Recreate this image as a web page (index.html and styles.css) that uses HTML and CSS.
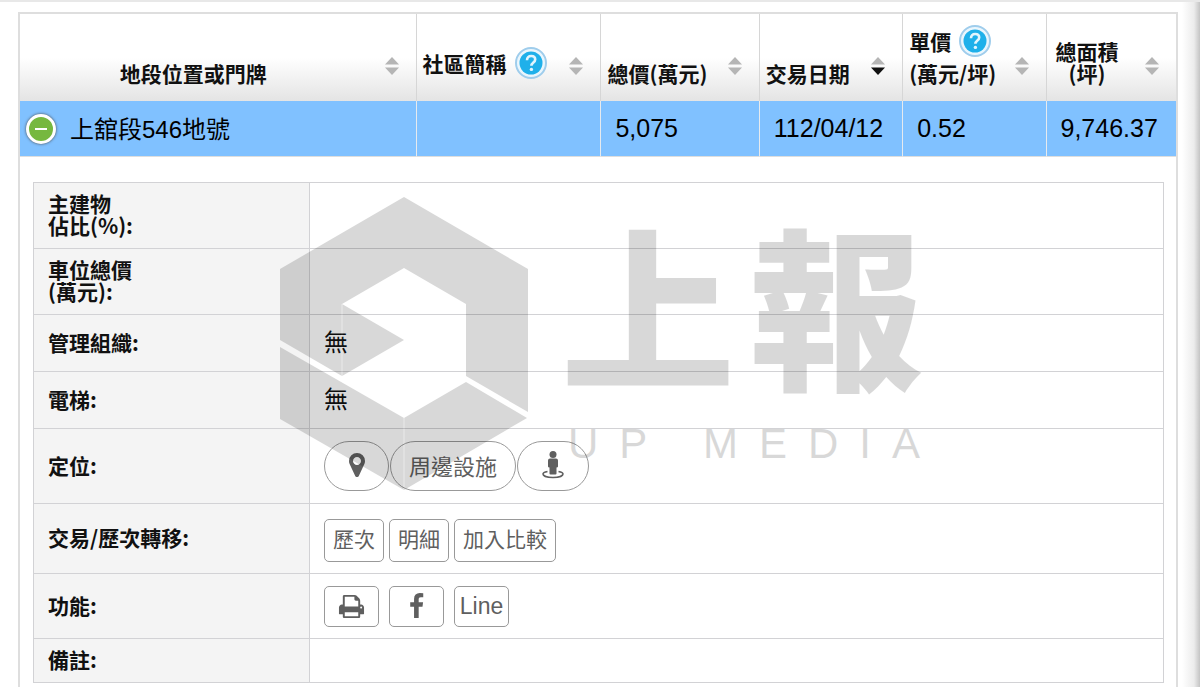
FILE: index.html
```html
<!DOCTYPE html>
<html lang="zh-Hant">
<head>
    <meta charset="UTF-8">
    <meta name="viewport" content="width=device-width, initial-scale=1.0">
    <title>上舘段546地號</title>
    <link rel="stylesheet" href="styles.css">
</head>
<body>
    <!-- shared icons -->
    <svg class="sprite" width="0" height="0" aria-hidden="true">
        <symbol id="icon-sort" viewBox="0 0 14 18">
            <path class="up" d="M7 0l7 7.500H0z"/>
            <path class="down" d="M7 18l7-7.500H0z"/>
        </symbol>
        <symbol id="icon-help" viewBox="0 0 32 32">
            <circle cx="16" cy="16" r="15" fill="#eaf6fd" stroke="#9fcdec" stroke-width="2"/>
            <circle cx="16" cy="16" r="11.500" fill="#1fb0ea"/>
            <path d="M12 13.200c0-2.600 1.700-4.200 4.200-4.200 2.400 0 4 1.400 4 3.500 0 3-3.800 3-3.800 6.300" fill="none" stroke="#e2f5fd" stroke-width="2.600"/>
            <circle cx="16.400" cy="22.400" r="1.700" fill="#e2f5fd"/>
        </symbol>
    </svg>

    <div class="page">
        <table class="result">
            <colgroup>
                <col class="col-place">
                <col class="col-community">
                <col class="col-total">
                <col class="col-date">
                <col class="col-unit">
                <col class="col-area">
            </colgroup>
            <thead>
                <tr>
                    <th>
                        <div class="head">
                            <span class="head-text center">地段位置或門牌</span>
                            <svg class="sort"><use href="#icon-sort"/></svg>
                        </div>
                    </th>
                    <th>
                        <div class="head">
                            <span class="head-text"><span class="with-help">社區簡稱 <svg class="help"><use href="#icon-help"/></svg></span></span>
                            <svg class="sort"><use href="#icon-sort"/></svg>
                        </div>
                    </th>
                    <th>
                        <div class="head">
                            <span class="head-text">總價(萬元)</span>
                            <svg class="sort"><use href="#icon-sort"/></svg>
                        </div>
                    </th>
                    <th>
                        <div class="head">
                            <span class="head-text">交易日期</span>
                            <svg class="sort desc"><use href="#icon-sort"/></svg>
                        </div>
                    </th>
                    <th>
                        <div class="head">
                            <span class="head-text"><span class="with-help">單價 <svg class="help"><use href="#icon-help"/></svg></span>(萬元/坪)</span>
                            <svg class="sort"><use href="#icon-sort"/></svg>
                        </div>
                    </th>
                    <th>
                        <div class="head">
                            <span class="head-text area">總面積<br>(坪)</span>
                            <svg class="sort"><use href="#icon-sort"/></svg>
                        </div>
                    </th>
                </tr>
            </thead>
            <tbody>
                <tr class="selected">
                    <td class="place">
                        <div class="place-inner">
                            <button type="button" class="toggle" aria-label="收合"></button>
                            <span class="place-name">上舘段546地號</span>
                        </div>
                    </td>
                    <td></td>
                    <td>5,075</td>
                    <td>112/04/12</td>
                    <td>0.52</td>
                    <td>9,746.37</td>
                </tr>
                <tr>
                    <td colspan="6" class="child">
                        <table class="detail">
                            <tr>
                                <th scope="row">主建物<br>佔比(%):</th>
                                <td></td>
                            </tr>
                            <tr>
                                <th scope="row">車位總價<br>(萬元):</th>
                                <td></td>
                            </tr>
                            <tr>
                                <th scope="row">管理組織:</th>
                                <td>無</td>
                            </tr>
                            <tr>
                                <th scope="row">電梯:</th>
                                <td>無</td>
                            </tr>
                            <tr>
                                <th scope="row">定位:</th>
                                <td>
                                    <div class="pills">
                                        <button type="button" class="pill" aria-label="地圖">
                                            <svg class="marker" viewBox="0 128 1024 1536"><path d="M768 640q0-106-75-181t-181-75-181 75-75 181 75 181 181 75 181-75 75-181zm256 0q0 109-33 179l-364 774q-16 33-47.500 52t-67.500 19-67.500-19-46.500-52l-365-774q-33-70-33-179 0-212 150-362t362-150 362 150 150 362z"/></svg>
                                        </button>
                                        <button type="button" class="pill wide">周邊設施</button>
                                        <button type="button" class="pill street" aria-label="街景">
                                            <svg class="person" viewBox="0 0 22 28">
                                                <circle cx="11" cy="3.500" r="3.500"/>
                                                <path d="M8 7.500h6q2 0 2 2v6q0 1-1.500 1v6q0 1-1 1h-5q-1 0-1-1v-6q-1.500 0-1.500-1v-6q0-2 2-2z"/>
                                                <path d="M5.500 20.500c-3 .6-4.500 1.500-4.500 2.600 0 1.900 4.200 3.400 10 3.400s10-1.500 10-3.400c0-1.100-1.500-2-4.500-2.600" fill="none" stroke="currentColor" stroke-width="1.600"/>
                                            </svg>
                                        </button>
                                    </div>
                                </td>
                            </tr>
                            <tr>
                                <th scope="row">交易/歷次轉移:</th>
                                <td>
                                    <div class="history">
                                        <button type="button" class="btn">歷次</button>
                                        <button type="button" class="btn">明細</button>
                                        <button type="button" class="btn">加入比較</button>
                                    </div>
                                </td>
                            </tr>
                            <tr>
                                <th scope="row">功能:</th>
                                <td>
                                    <div class="share">
                                        <button type="button" class="btn" aria-label="列印">
                                            <svg class="icon" viewBox="0 0 1792 1792"><path d="M448 1536h896v-256h-896v256zm0-640h896v-384h-160q-40 0-68-28t-28-68v-160h-640v640zm1152 64q0-26-19-45t-45-19-45 19-19 45 19 45 45 19 45-19 19-45zm128 0v416q0 13-9.500 22.500t-22.500 9.500h-224v160q0 40-28 68t-68 28h-960q-40 0-68-28t-28-68v-160h-224q-13 0-22.500-9.500t-9.500-22.500v-416q0-79 56.500-135.500t135.500-56.500h64v-544q0-40 28-68t68-28h672q40 0 88 20t76 48l152 152q28 28 48 76t20 88v256h64q79 0 135.500 56.500t56.500 135.500z"/></svg>
                                        </button>
                                        <button type="button" class="btn" aria-label="Facebook">
                                            <svg class="icon" viewBox="0 0 1792 1792"><path d="M1343 12v264h-157q-86 0-116 36t-30 108v189h293l-39 296h-254v759h-306v-759h-255v-296h255v-218q0-186 104-288.500t277-102.500q147 0 228 12z"/></svg>
                                        </button>
                                        <button type="button" class="btn line">Line</button>
                                    </div>
                                </td>
                            </tr>
                            <tr>
                                <th scope="row">備註:</th>
                                <td></td>
                            </tr>
                        </table>
                    </td>
                </tr>
            </tbody>
        </table>

        <div class="watermark">
            <svg class="mark" viewBox="0 0 250 294">
                <path d="M125 0L249 72v143l-62-36v-72l-62-36-62 36 62 36-62 36L1 143V72z"/>
                <path d="M1 150l124 71 62-36 61 36-123 72L1 222z"/>
                <path class="seam" d="M63 107v72M125 221v72"/>
            </svg>
            <div class="brand">
                <div class="brand-zh"><span>上</span><span>報</span></div>
                <div class="brand-en">
                    <div class="word"><span>U</span><span>P</span></div>
                    <div class="word"><span>M</span><span>E</span><span>D</span><span>I</span><span>A</span></div>
                </div>
            </div>
        </div>
    </div>
</body>
</html>
```
FILE: styles.css
```css
* {
    box-sizing: border-box;
}
body {
    margin: 0;
    background-color: #fff;
    color: #111;
    font-family: "Liberation Sans", "Noto Sans CJK TC", sans-serif;
}
.sprite {
    position: absolute;
}
.page {
    position: relative;
    min-height: 100vh;
    padding: 10px 22px 0 18px;
    border-top: 2px solid #e8e8e8;
    background: linear-gradient(to left, #c4c4c4, #ececec 6px, #fff 18px);
}
table {
    width: 100%;
    border-spacing: 0;
    border-collapse: collapse;
}
button {
    margin: 0;
    padding: 0;
    font-family: inherit;
    cursor: pointer;
}

/* result list */
.result {
    table-layout: fixed;
    border-collapse: separate;
    border: 2px solid #dedede;
    border-bottom: none;
    background-color: #fff;
}
.col-place { width: 34.3%; }
.col-community { width: 16%; }
.col-total { width: 13.7%; }
.col-date { width: 12.4%; }
.col-unit { width: 12.4%; }

.result > thead th {
    height: 87px;
    padding: 0 17px 17px 6px;
    border-right: 1px solid #d6d6d6;
    background: linear-gradient(#fff 50%, #e4e4e4);
    font-family: "Noto Sans CJK TC", sans-serif;
    font-size: 21px;
    font-weight: 700;
    line-height: 22px;
    text-align: left;
    vertical-align: bottom;
    white-space: nowrap;
}
.result > thead th:last-child,
.result > tbody > tr > td:last-child {
    border-right: none;
}
.head {
    display: flex;
    align-items: flex-end;
}
.head-text {
    flex: 1;
}
.center {
    padding-right: 24px;
    text-align: center;
}
.area {
    flex: none;
    margin: 0 auto 0 3px;
    text-align: center;
}
.with-help {
    display: flex;
    align-items: center;
    gap: 8px;
    height: 42px;
}
.help {
    width: 32px;
    height: 32px;
}
.sort {
    width: 14px;
    height: 18px;
    margin-bottom: 9px;
}
.up {
    fill: #b5b5b5;
}
.down {
    fill: var(--sort-down, #b5b5b5);
}
.desc {
    --sort-down: #111;
}

.selected td {
    height: 56px;
    padding: 0 14px;
    border-right: 1px solid #e6eaee;
    border-bottom: 1px solid #dedede;
    background-color: #80c1ff;
    color: #000;
    font-size: 25px;
    white-space: nowrap;
}
.selected .place {
    padding: 0 6px;
    font-size: 24px;
}
.place-inner {
    display: flex;
    align-items: center;
    gap: 14px;
}
.place-name {
    padding-bottom: 3px;
}
.toggle {
    display: flex;
    align-items: center;
    justify-content: center;
    width: 30px;
    height: 30px;
    border: 3px solid #fff;
    border-radius: 50%;
    background-color: #76b83f;
    box-shadow: 0 0 3px #444;
}
.toggle::before {
    content: "";
    width: 12px;
    height: 2px;
    background-color: #fff;
}

/* expanded row */
.child {
    padding: 25px 12px 4px 13px;
}
.detail th,
.detail td {
    padding: 11px 14px;
    border: 1px solid #d2d2d5;
    text-align: left;
}
.detail th {
    width: 276px;
    padding: 9px 14px 12px;
    background-color: #f4f4f4;
    font-family: "Noto Sans CJK TC", sans-serif;
    font-size: 21px;
    font-weight: 700;
    line-height: 22px;
}
.detail td {
    font-size: 24px;
    line-height: 34px;
}
.pills,
.history,
.share {
    display: flex;
    align-items: center;
}
.pills {
    gap: 1px;
    height: 52px;
}
.history {
    align-items: flex-end;
    gap: 5px;
    height: 47px;
}
.share {
    gap: 10px;
    height: 42px;
}
.pill,
.btn {
    display: flex;
    align-items: center;
    justify-content: center;
    border: 1px solid #999;
    background-color: transparent;
    color: #5f5f5f;
    font-size: 21px;
}
.pill {
    width: 65px;
    height: 50px;
    padding-bottom: 2px;
    border-radius: 25px;
    font-size: 22px;
}
.pill.wide {
    width: 126px;
}
.pill.street {
    width: 72px;
}
.btn {
    height: 43px;
    padding: 0 8px 5px;
    border-radius: 5px;
}
.share .btn {
    width: 55px;
    height: 41px;
    padding: 0;
}
.share .line {
    font-size: 23px;
}
.pill svg,
.btn svg {
    fill: currentColor;
}
.marker {
    width: 16px;
    height: 24px;
}
.person {
    width: 22px;
    height: 28px;
}
.icon {
    width: 27px;
    height: 27px;
}

/* logo lying over the table */
.watermark {
    position: absolute;
    top: 195px;
    left: 279px;
    display: flex;
    gap: 39px;
    opacity: 0.15;
    pointer-events: none;
}
.mark {
    width: 250px;
    height: 294px;
}
.seam {
    stroke: #fff;
    stroke-width: 1;
    opacity: 0.5;
}
.brand {
    width: 352px;
    color: #000;
}
.brand-zh {
    display: flex;
    justify-content: space-between;
    height: 226px;
    margin: 0 -3px 0 -7px;
    font-family: "Noto Sans CJK TC", sans-serif;
    font-size: 174px;
    font-weight: 900;
    line-height: 208px;
}
.brand-en {
    display: flex;
    justify-content: space-between;
    font-size: 42px;
    line-height: 42px;
}
.word {
    display: flex;
    gap: 21px;
}
```
